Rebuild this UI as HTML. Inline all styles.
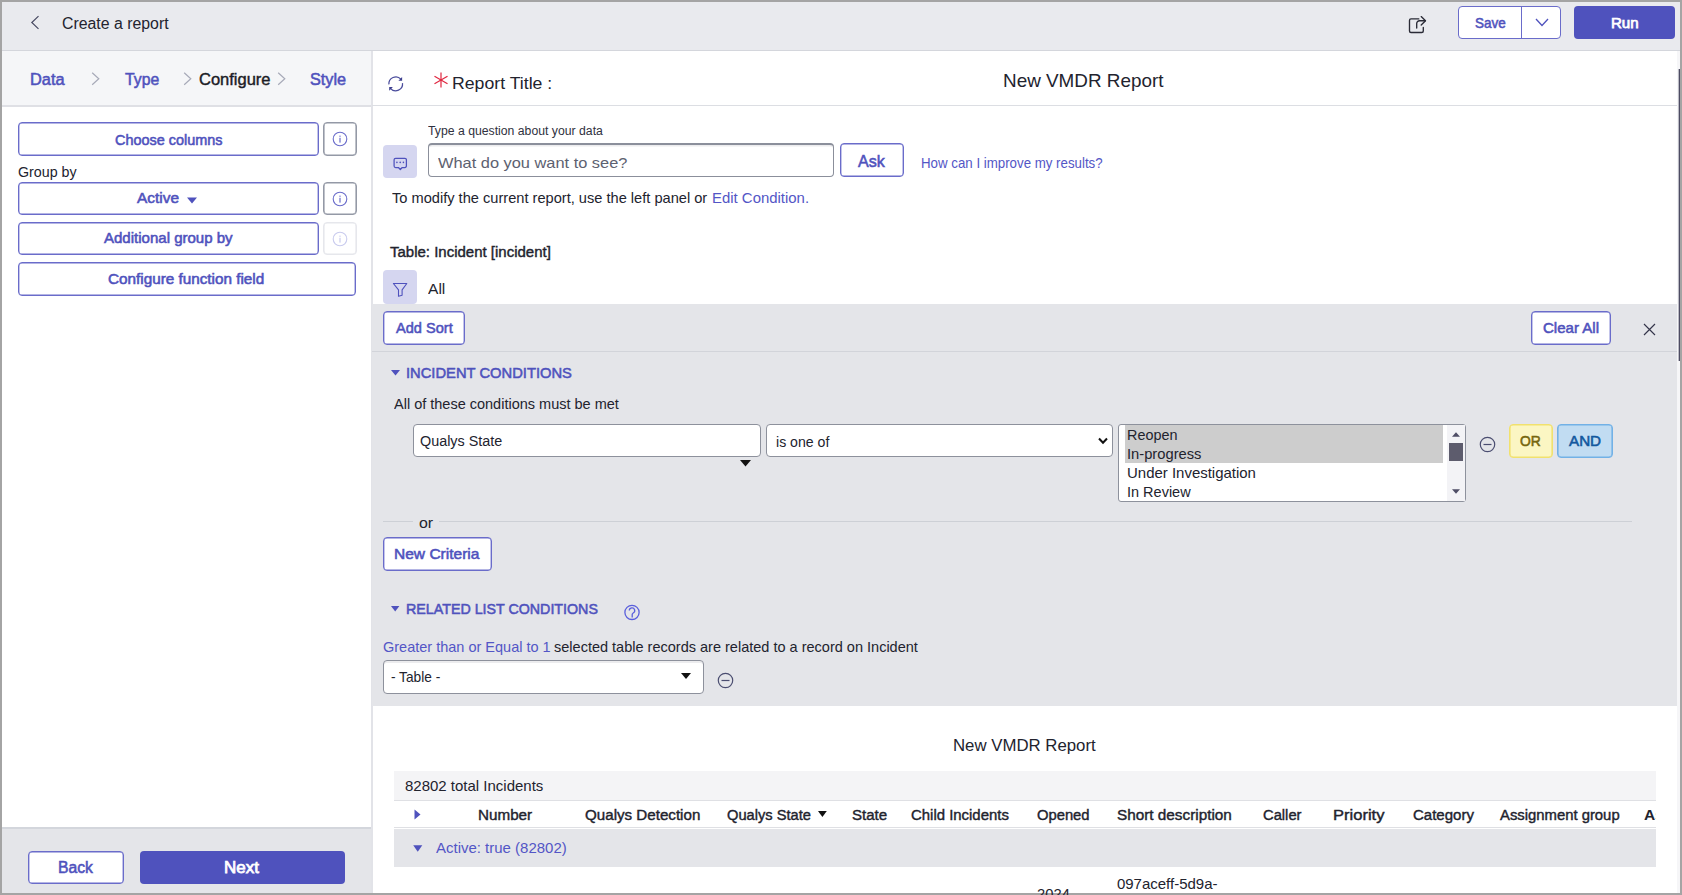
<!DOCTYPE html><html><head><meta charset="utf-8"><style>
html,body{margin:0;padding:0;width:1682px;height:895px;overflow:hidden;background:#fff}
.t{position:absolute;white-space:nowrap;font-family:"Liberation Sans",sans-serif;line-height:1;transform-origin:0 0}
</style></head><body>
<div style="position:absolute;left:0px;top:0px;width:1682px;height:895px;background:#a4a4a4"></div>
<div style="position:absolute;left:2px;top:2px;width:1678px;height:891px;background:#ffffff"></div>
<div style="position:absolute;left:2px;top:2px;width:1678px;height:48px;background:#e9eaee"></div>
<div style="position:absolute;left:2px;top:50px;width:1678px;height:1px;background:#d4d6dc"></div>
<div style="position:absolute;left:2px;top:51px;width:369px;height:54px;background:#f5f6f8"></div>
<div style="position:absolute;left:2px;top:105px;width:369px;height:2px;background:#dfe0e5"></div>
<div style="position:absolute;left:371px;top:51px;width:2px;height:842px;background:#e2e3e8"></div>
<div style="position:absolute;left:372px;top:105px;width:1305px;height:1px;background:#dcdee3"></div>
<div style="position:absolute;left:1677px;top:51px;width:3px;height:842px;background:#f6f6f8"></div>
<div style="position:absolute;left:1679px;top:69px;width:1px;height:292px;background:#4d4c63"></div>
<div style="position:absolute;left:1678px;top:69px;width:1px;height:292px;background:rgba(77,76,99,0.35)"></div>
<div style="position:absolute;left:2px;top:827px;width:369px;height:2px;background:#d3d6dc"></div>
<div style="position:absolute;left:2px;top:829px;width:369px;height:64px;background:#e4e5e9"></div>
<svg style="position:absolute;left:29px;top:15px" width="12" height="15" viewBox="0 0 12 15"><path d="M9.5 1.2 L2.8 7.5 L9.5 13.8" fill="none" stroke="#45475f" stroke-width="1.15"/></svg>
<svg style="position:absolute;left:1402px;top:10px" width="30" height="30" viewBox="0 0 30 30"><g fill="none" stroke="#2a2b36" stroke-width="1.35" stroke-linecap="round" stroke-linejoin="round"><path d="M16.8 8.9 H9 A1.5 1.5 0 0 0 7.5 10.4 V21 A1.5 1.5 0 0 0 9 22.5 H19.8 A1.5 1.5 0 0 0 21.3 21 V17.4"/><path d="M14.7 18.1 V13.6 A2.9 2.9 0 0 1 17.6 10.7 H23.3"/><path d="M19.2 6.6 L23.5 10.8 L19.2 15"/></g></svg>
<div style="position:absolute;left:1458px;top:6px;width:103px;height:33px;box-sizing:border-box;border:1px solid #6a6cca;border-radius:4px;background:#fff"></div>
<div style="position:absolute;left:1521px;top:6px;width:1px;height:33px;background:#6a6cca"></div>
<svg style="position:absolute;left:1535px;top:18px" width="14" height="9" viewBox="0 0 14 9"><path d="M1 1 L7 7.5 L13 1" fill="none" stroke="#4f52bd" stroke-width="1.3"/></svg>
<div style="position:absolute;left:1574px;top:6px;width:101px;height:33px;background:#4f52bd;border-radius:4px"></div>
<svg style="position:absolute;left:90.5px;top:72px" width="10" height="14" viewBox="0 0 10 14"><path d="M1.2 0.8 L7.8 6.8 L1.2 12.8" fill="none" stroke="#a7aab8" stroke-width="1.2"/></svg>
<svg style="position:absolute;left:183px;top:72px" width="10" height="14" viewBox="0 0 10 14"><path d="M1.2 0.8 L7.8 6.8 L1.2 12.8" fill="none" stroke="#a7aab8" stroke-width="1.2"/></svg>
<svg style="position:absolute;left:276.6px;top:72px" width="10" height="14" viewBox="0 0 10 14"><path d="M1.2 0.8 L7.8 6.8 L1.2 12.8" fill="none" stroke="#a7aab8" stroke-width="1.2"/></svg>
<div style="position:absolute;left:18px;top:122px;width:301px;height:34px;box-sizing:border-box;border:1px solid #6a6cca;box-shadow:inset 0 0 0 0.4px #6a6cca;border-radius:4px;background:#fff"></div>
<div style="position:absolute;left:323px;top:122px;width:34px;height:34px;box-sizing:border-box;border:1px solid #9499a6;box-shadow:inset 0 0 0 0.6px #9499a6;border-radius:4px;background:#fff"></div>
<svg style="position:absolute;left:332.0px;top:131.0px;opacity:1" width="16" height="16" viewBox="0 0 16 16"><circle cx="8" cy="8" r="6.8" fill="none" stroke="#6a6cca" stroke-width="1.1"/><rect x="7.4" y="4.6" width="1.2" height="1.2" fill="#6a6cca"/><rect x="7.4" y="6.8" width="1.2" height="4.8" fill="#6a6cca"/></svg>
<div style="position:absolute;left:18px;top:182px;width:301px;height:33px;box-sizing:border-box;border:1px solid #6a6cca;box-shadow:inset 0 0 0 0.4px #6a6cca;border-radius:4px;background:#fff"></div>
<div style="position:absolute;left:323px;top:182px;width:34px;height:33px;box-sizing:border-box;border:1px solid #9499a6;box-shadow:inset 0 0 0 0.6px #9499a6;border-radius:4px;background:#fff"></div>
<svg style="position:absolute;left:332.0px;top:190.5px;opacity:1" width="16" height="16" viewBox="0 0 16 16"><circle cx="8" cy="8" r="6.8" fill="none" stroke="#6a6cca" stroke-width="1.1"/><rect x="7.4" y="4.6" width="1.2" height="1.2" fill="#6a6cca"/><rect x="7.4" y="6.8" width="1.2" height="4.8" fill="#6a6cca"/></svg>
<svg style="position:absolute;left:187px;top:197px" width="10" height="7" viewBox="0 0 10 7"><path d="M0 0.5 H10 L5 6.5 Z" fill="#4f52bd"/></svg>
<div style="position:absolute;left:18px;top:222px;width:301px;height:33px;box-sizing:border-box;border:1px solid #6a6cca;box-shadow:inset 0 0 0 0.4px #6a6cca;border-radius:4px;background:#fff"></div>
<div style="position:absolute;left:323px;top:222px;width:34px;height:33px;box-sizing:border-box;border:1px solid #e6e7ec;box-shadow:inset 0 0 0 0.6px #e6e7ec;border-radius:4px;background:#fff"></div>
<svg style="position:absolute;left:332.0px;top:230.5px;opacity:1" width="16" height="16" viewBox="0 0 16 16"><circle cx="8" cy="8" r="6.8" fill="none" stroke="#c9cbee" stroke-width="1.1"/><rect x="7.4" y="4.6" width="1.2" height="1.2" fill="#c9cbee"/><rect x="7.4" y="6.8" width="1.2" height="4.8" fill="#c9cbee"/></svg>
<div style="position:absolute;left:18px;top:262px;width:338px;height:34px;box-sizing:border-box;border:1px solid #6a6cca;box-shadow:inset 0 0 0 0.4px #6a6cca;border-radius:4px;background:#fff"></div>
<div style="position:absolute;left:28px;top:851px;width:96px;height:33px;box-sizing:border-box;border:1px solid #6a6cca;box-shadow:inset 0 0 0 0.4px #6a6cca;border-radius:4px;background:#fff"></div>
<div style="position:absolute;left:140px;top:851px;width:205px;height:33px;background:#4f52bd;border-radius:4px"></div>
<svg style="position:absolute;left:382px;top:68px" width="28" height="28" viewBox="0 0 28 28"><g fill="none" stroke="#4a4c9c" stroke-width="1.25"><path d="M6.9 16.4 A6.9 6.9 0 0 1 18.9 11.2"/><path d="M20.5 15.1 A6.9 6.9 0 0 1 8.6 20.6"/></g><path d="M20.1 9.0 V12.7 H16.4 Z" fill="#3e408f"/><path d="M7.2 19.0 H10.9 L7.2 22.7 Z" fill="#3e408f"/></svg>
<svg style="position:absolute;left:433px;top:72px" width="16" height="16" viewBox="0 0 16 16"><g stroke="#e0263f" stroke-width="1.2"><path d="M8 0.5 V15.5"/><path d="M1.5 4.2 L14.5 11.8"/><path d="M1.5 11.8 L14.5 4.2"/></g></svg>
<div style="position:absolute;left:383px;top:145px;width:34px;height:33px;background:#d5d6f0;border-radius:4px"></div>
<svg style="position:absolute;left:392px;top:154px" width="16" height="17" viewBox="0 0 16 17"><path d="M3.6 4.3 H12.9 A1.5 1.5 0 0 1 14.4 5.8 V12 A1.5 1.5 0 0 1 12.9 13.5 H10.2 L8.3 15.5 L6.4 13.5 H3.6 A1.5 1.5 0 0 1 2.1 12 V5.8 A1.5 1.5 0 0 1 3.6 4.3 Z" fill="none" stroke="#4f52bd" stroke-width="1.25" stroke-linejoin="round"/><circle cx="4.9" cy="8.4" r="0.8" fill="#4f52bd"/><circle cx="8.2" cy="8.4" r="0.8" fill="#4f52bd"/><circle cx="11.4" cy="8.4" r="0.8" fill="#4f52bd"/></svg>
<div style="position:absolute;left:428px;top:143px;width:406px;height:34px;box-sizing:border-box;border:1px solid #8b8f9b;border-top:2px solid #8b8f9b;border-radius:4px;background:#fff;box-shadow:inset 0 1.5px 0 #ececee"></div>
<div style="position:absolute;left:840px;top:143px;width:64px;height:34px;box-sizing:border-box;border:1px solid #6a6cca;box-shadow:inset 0 0 0 0.4px #6a6cca;border-radius:4px;background:#fff"></div>
<div style="position:absolute;left:383px;top:270px;width:34px;height:34px;background:#d5d6f0;border-radius:4px"></div>
<svg style="position:absolute;left:380px;top:267px" width="40" height="40" viewBox="0 0 40 40"><path d="M13.4 16.5 H26.8 L22.1 22.8 V28.2 L18.5 29.3 V22.8 Z" fill="none" stroke="#4f52bd" stroke-width="1.1" stroke-linejoin="round"/></svg>
<div style="position:absolute;left:372px;top:304px;width:1305px;height:402px;background:#e4e5e9"></div>
<div style="position:absolute;left:372px;top:351px;width:1305px;height:1px;background:#d2d4da"></div>
<div style="position:absolute;left:383px;top:311px;width:82px;height:34px;box-sizing:border-box;border:1px solid #6a6cca;box-shadow:inset 0 0 0 0.4px #6a6cca;border-radius:4px;background:#fff"></div>
<div style="position:absolute;left:1531px;top:311px;width:80px;height:34px;box-sizing:border-box;border:1px solid #6a6cca;box-shadow:inset 0 0 0 0.4px #6a6cca;border-radius:4px;background:#fff"></div>
<svg style="position:absolute;left:1643px;top:323px" width="13" height="13" viewBox="0 0 13 13"><path d="M1 1 L12 12 M12 1 L1 12" stroke="#34354a" stroke-width="1.15"/></svg>
<svg style="position:absolute;left:391px;top:370px" width="9" height="6" viewBox="0 0 9 6"><path d="M0 0 H9 L4.5 5.5 Z" fill="#4f52bd"/></svg>
<div style="position:absolute;left:413px;top:424px;width:348px;height:33px;box-sizing:border-box;border:1px solid #8d919c;border-radius:4px;background:#fff"></div>
<svg style="position:absolute;left:740px;top:460px" width="11" height="7" viewBox="0 0 11 7"><path d="M0 0 H11 L5.5 6.5 Z" fill="#111"/></svg>
<div style="position:absolute;left:766px;top:424px;width:347px;height:33px;box-sizing:border-box;border:1px solid #8d919c;border-radius:4px;background:#fff"></div>
<svg style="position:absolute;left:1098px;top:437px" width="10" height="8" viewBox="0 0 10 8"><path d="M1 1.5 L5 5.8 L9 1.5" fill="none" stroke="#111" stroke-width="2"/></svg>
<div style="position:absolute;left:1118px;top:424px;width:348px;height:78px;box-sizing:border-box;border:1px solid #8d919c;border-radius:3px;background:#fff"></div>
<div style="position:absolute;left:1125px;top:425px;width:318px;height:38px;background:#cdcdcd"></div>
<div style="position:absolute;left:1447px;top:425px;width:18px;height:76px;background:#f3f3f6"></div>
<svg style="position:absolute;left:1452px;top:432px" width="8" height="5" viewBox="0 0 8 5"><path d="M0 4.8 H8 L4 0.3 Z" fill="#4f4e66"/></svg>
<div style="position:absolute;left:1449px;top:443px;width:14px;height:18px;background:#5d5c6d"></div>
<svg style="position:absolute;left:1452px;top:489px" width="8" height="5" viewBox="0 0 8 5"><path d="M0 0.2 H8 L4 4.7 Z" fill="#4f4e66"/></svg>
<svg style="position:absolute;left:1478.5px;top:435.5px" width="17" height="17" viewBox="0 0 17 17"><circle cx="8.5" cy="8.5" r="7.2" fill="none" stroke="#4a4d70" stroke-width="1.2"/><path d="M4.5 8.5 H12.5" stroke="#4a4d70" stroke-width="1.2"/></svg>
<div style="position:absolute;left:1508.5px;top:424px;width:44.5px;height:34px;box-sizing:border-box;border:1px solid #f1e16e;box-shadow:inset 0 0 0 0.6px #f1e16e;border-radius:4px;background:#fbf6c3"></div>
<div style="position:absolute;left:1557px;top:424px;width:56px;height:34px;box-sizing:border-box;border:1px solid #72b1e6;box-shadow:inset 0 0 0 0.6px #72b1e6;border-radius:4px;background:#c1dcf2"></div>
<div style="position:absolute;left:383px;top:521px;width:30px;height:1px;background:#cdd0d6"></div>
<div style="position:absolute;left:439px;top:521px;width:1193px;height:1px;background:#cdd0d6"></div>
<div style="position:absolute;left:383px;top:537px;width:109px;height:34px;box-sizing:border-box;border:1px solid #6a6cca;box-shadow:inset 0 0 0 0.4px #6a6cca;border-radius:4px;background:#fff"></div>
<svg style="position:absolute;left:390.8px;top:606.3px" width="9" height="6" viewBox="0 0 9 6"><path d="M0 0 H8.4 L4.2 5.6 Z" fill="#4f52bd"/></svg>
<svg style="position:absolute;left:622px;top:602px" width="20" height="20" viewBox="0 0 20 20"><circle cx="10" cy="10.4" r="7.1" fill="none" stroke="#5a5fdc" stroke-width="1.3"/><path d="M7.3 8.6 A2.7 2.7 0 1 1 11.2 11 Q10.2 11.6 10.2 12.6 V15.6" fill="none" stroke="#5a5fdc" stroke-width="1.3"/></svg>
<div style="position:absolute;left:383px;top:660px;width:321px;height:34px;box-sizing:border-box;border:1px solid #8d919c;border-radius:4px;background:#fff;box-shadow:inset 0 2px 0 #ececee"></div>
<svg style="position:absolute;left:681px;top:673px" width="10" height="7" viewBox="0 0 10 7"><path d="M0 0 H10 L5 6 Z" fill="#111"/></svg>
<svg style="position:absolute;left:716.5px;top:672.0px" width="17" height="17" viewBox="0 0 17 17"><circle cx="8.5" cy="8.5" r="7.2" fill="none" stroke="#4a4d70" stroke-width="1.2"/><path d="M4.5 8.5 H12.5" stroke="#4a4d70" stroke-width="1.2"/></svg>
<div style="position:absolute;left:393.5px;top:770.5px;width:1262.0px;height:29.5px;background:#f4f4f6"></div>
<div style="position:absolute;left:393.5px;top:800px;width:1262.0px;height:1px;background:#dfe0e4"></div>
<div style="position:absolute;left:393.5px;top:827px;width:1262.0px;height:1px;background:#dfe0e4"></div>
<div style="position:absolute;left:393.5px;top:829px;width:1262.0px;height:38px;background:#e4e5e9"></div>
<svg style="position:absolute;left:414px;top:809px" width="7" height="11" viewBox="0 0 7 11"><path d="M0.5 0.5 V10.5 L6.5 5.5 Z" fill="#4f52bd"/></svg>
<div style="position:absolute;left:1644px;top:800px;width:11.5px;height:27px;overflow:hidden"><span style="position:absolute;left:0;top:6.5px;font:700 15.5px/1 'Liberation Sans',sans-serif;color:#22232e">As</span></div>
<svg style="position:absolute;left:818.3px;top:811px" width="9" height="6" viewBox="0 0 9 6"><path d="M0 0 H8.8 L4.4 5.9 Z" fill="#111"/></svg>
<svg style="position:absolute;left:412.5px;top:845px" width="10" height="7" viewBox="0 0 10 7"><path d="M0.2 0.2 H9.3 L4.75 6.8 Z" fill="#4f52bd"/></svg>
<span class="t" style="left:61.81px;top:15.96px;font-size:16px;font-weight:400;color:#22232e;transform:scaleX(0.9907);">Create a report</span>
<span class="t" style="left:1475.00px;top:15.40px;font-size:15px;font-weight:400;-webkit-text-stroke:0.55px #4f52bd;color:#4f52bd;transform:scaleX(0.9000);">Save</span>
<span class="t" style="left:1610.60px;top:15.40px;font-size:15px;font-weight:400;-webkit-text-stroke:0.75px #ffffff;color:#ffffff;transform:scaleX(1.0038);">Run</span>
<span class="t" style="left:30.24px;top:70.61px;font-size:17px;font-weight:400;-webkit-text-stroke:0.55px #4f52bd;color:#4f52bd;transform:scaleX(0.9639);">Data</span>
<span class="t" style="left:124.80px;top:70.61px;font-size:17px;font-weight:400;-webkit-text-stroke:0.55px #4f52bd;color:#4f52bd;transform:scaleX(0.9270);">Type</span>
<span class="t" style="left:198.60px;top:70.61px;font-size:17px;font-weight:400;-webkit-text-stroke:0.42px #1b1c26;color:#1b1c26;transform:scaleX(0.9703);">Configure</span>
<span class="t" style="left:309.70px;top:70.61px;font-size:17px;font-weight:400;-webkit-text-stroke:0.55px #4f52bd;color:#4f52bd;transform:scaleX(0.9553);">Style</span>
<span class="t" style="left:114.50px;top:132.73px;font-size:14.5px;font-weight:400;-webkit-text-stroke:0.55px #4f52bd;color:#4f52bd;transform:scaleX(0.9954);">Choose columns</span>
<span class="t" style="left:18.30px;top:165.25px;font-size:14px;font-weight:400;color:#22232e;transform:scaleX(1.0190);">Group by</span>
<span class="t" style="left:136.50px;top:191.33px;font-size:14.5px;font-weight:400;-webkit-text-stroke:0.55px #4f52bd;color:#4f52bd;transform:scaleX(1.0625);">Active</span>
<span class="t" style="left:103.60px;top:230.93px;font-size:14.5px;font-weight:400;-webkit-text-stroke:0.55px #4f52bd;color:#4f52bd;transform:scaleX(1.0360);">Additional group by</span>
<span class="t" style="left:108.40px;top:271.73px;font-size:14.5px;font-weight:400;-webkit-text-stroke:0.55px #4f52bd;color:#4f52bd;transform:scaleX(1.0534);">Configure function field</span>
<span class="t" style="left:57.72px;top:859.76px;font-size:16px;font-weight:400;-webkit-text-stroke:0.55px #4f52bd;color:#4f52bd;transform:scaleX(0.9829);">Back</span>
<span class="t" style="left:223.64px;top:859.76px;font-size:16px;font-weight:400;-webkit-text-stroke:0.75px #ffffff;color:#ffffff;transform:scaleX(1.0606);">Next</span>
<span class="t" style="left:451.63px;top:74.53px;font-size:16.5px;font-weight:400;color:#22232e;transform:scaleX(1.0714);">Report Title :</span>
<span class="t" style="left:1003.18px;top:72.24px;font-size:18.5px;font-weight:400;color:#22232e;transform:scaleX(1.0204);">New VMDR Report</span>
<span class="t" style="left:428.30px;top:125.24px;font-size:12px;font-weight:400;color:#2f3140;transform:scaleX(1.0198);">Type a question about your data</span>
<span class="t" style="left:437.50px;top:154.50px;font-size:15px;font-weight:400;color:#5d6170;transform:scaleX(1.0919);">What do you want to see?</span>
<span class="t" style="left:858.00px;top:153.13px;font-size:16.5px;font-weight:400;-webkit-text-stroke:0.55px #4f52bd;color:#4f52bd;transform:scaleX(0.9750);">Ask</span>
<span class="t" style="left:920.61px;top:155.10px;font-size:15px;font-weight:400;color:#5356c6;transform:scaleX(0.8858);">How can I improve my results?</span>
<span class="t" style="left:392.00px;top:189.80px;font-size:15px;font-weight:400;color:#22232e;transform:scaleX(0.9744);">To modify the current report, use the left panel or</span>
<span class="t" style="left:711.51px;top:189.80px;font-size:15px;font-weight:400;color:#5356c6;transform:scaleX(0.9948);">Edit Condition.</span>
<span class="t" style="left:389.90px;top:244.48px;font-size:15.5px;font-weight:400;-webkit-text-stroke:0.42px #22232e;color:#22232e;transform:scaleX(0.9669);">Table: Incident [incident]</span>
<span class="t" style="left:427.60px;top:281.00px;font-size:15px;font-weight:400;color:#22232e;transform:scaleX(1.0375);">All</span>
<span class="t" style="left:395.50px;top:320.30px;font-size:15px;font-weight:400;-webkit-text-stroke:0.55px #4f52bd;color:#4f52bd;transform:scaleX(0.9712);">Add Sort</span>
<span class="t" style="left:1543.00px;top:319.90px;font-size:15px;font-weight:400;-webkit-text-stroke:0.55px #4f52bd;color:#4f52bd;transform:scaleX(1.0036);">Clear All</span>
<span class="t" style="left:406.15px;top:365.38px;font-size:15.5px;font-weight:400;-webkit-text-stroke:0.55px #4f52bd;color:#4f52bd;transform:scaleX(0.9506);">INCIDENT CONDITIONS</span>
<span class="t" style="left:393.70px;top:396.28px;font-size:15.5px;font-weight:400;color:#22232e;transform:scaleX(0.9353);">All of these conditions must be met</span>
<span class="t" style="left:420.40px;top:433.08px;font-size:15.5px;font-weight:400;color:#22232e;transform:scaleX(0.9273);">Qualys State</span>
<span class="t" style="left:776.29px;top:433.78px;font-size:15.5px;font-weight:400;color:#22232e;transform:scaleX(0.9103);">is one of</span>
<span class="t" style="left:1126.64px;top:427.00px;font-size:15px;font-weight:400;color:#22232e;transform:scaleX(0.9588);">Reopen</span>
<span class="t" style="left:1126.62px;top:445.60px;font-size:15px;font-weight:400;color:#22232e;transform:scaleX(0.9813);">In-progress</span>
<span class="t" style="left:1126.60px;top:464.70px;font-size:15px;font-weight:400;color:#22232e;transform:scaleX(0.9977);">Under Investigation</span>
<span class="t" style="left:1126.63px;top:484.20px;font-size:15px;font-weight:400;color:#22232e;transform:scaleX(0.9662);">In Review</span>
<span class="t" style="left:1519.60px;top:433.63px;font-size:14.5px;font-weight:400;-webkit-text-stroke:0.55px #76660f;color:#76660f;transform:scaleX(0.9545);">OR</span>
<span class="t" style="left:1569.00px;top:433.63px;font-size:14.5px;font-weight:400;-webkit-text-stroke:0.55px #12589e;color:#12589e;transform:scaleX(1.0484);">AND</span>
<span class="t" style="left:419.30px;top:514.90px;font-size:15px;font-weight:400;color:#22232e;transform:scaleX(1.0615);">or</span>
<span class="t" style="left:393.76px;top:546.00px;font-size:15px;font-weight:400;-webkit-text-stroke:0.55px #4f52bd;color:#4f52bd;transform:scaleX(1.0354);">New Criteria</span>
<span class="t" style="left:405.65px;top:601.10px;font-size:15px;font-weight:400;-webkit-text-stroke:0.55px #4f52bd;color:#4f52bd;transform:scaleX(0.9502);">RELATED LIST CONDITIONS</span>
<span class="t" style="left:383.10px;top:638.50px;font-size:15px;font-weight:400;color:#5356c6;transform:scaleX(0.9665);">Greater than or Equal to 1</span>
<span class="t" style="left:553.80px;top:638.50px;font-size:15px;font-weight:400;color:#22232e;transform:scaleX(0.9676);">selected table records are related to a record on Incident</span>
<span class="t" style="left:390.70px;top:669.20px;font-size:15px;font-weight:400;color:#22232e;transform:scaleX(0.9130);">- Table -</span>
<span class="t" style="left:952.58px;top:736.83px;font-size:16.5px;font-weight:400;color:#22232e;transform:scaleX(1.0171);">New VMDR Report</span>
<span class="t" style="left:404.50px;top:778.73px;font-size:14.5px;font-weight:400;color:#22232e;transform:scaleX(1.0336);">82802 total Incidents</span>
<span class="t" style="left:477.72px;top:807.08px;font-size:15.5px;font-weight:400;-webkit-text-stroke:0.42px #22232e;color:#22232e;transform:scaleX(0.9818);">Number</span>
<span class="t" style="left:584.80px;top:807.08px;font-size:15.5px;font-weight:400;-webkit-text-stroke:0.42px #22232e;color:#22232e;transform:scaleX(0.9771);">Qualys Detection</span>
<span class="t" style="left:727.10px;top:807.08px;font-size:15.5px;font-weight:400;-webkit-text-stroke:0.42px #22232e;color:#22232e;transform:scaleX(0.9449);">Qualys State</span>
<span class="t" style="left:851.60px;top:807.08px;font-size:15.5px;font-weight:400;-webkit-text-stroke:0.42px #22232e;color:#22232e;transform:scaleX(0.9722);">State</span>
<span class="t" style="left:911.30px;top:807.08px;font-size:15.5px;font-weight:400;-webkit-text-stroke:0.42px #22232e;color:#22232e;transform:scaleX(0.9627);">Child Incidents</span>
<span class="t" style="left:1036.50px;top:807.08px;font-size:15.5px;font-weight:400;-webkit-text-stroke:0.42px #22232e;color:#22232e;transform:scaleX(0.9527);">Opened</span>
<span class="t" style="left:1116.90px;top:807.08px;font-size:15.5px;font-weight:400;-webkit-text-stroke:0.42px #22232e;color:#22232e;transform:scaleX(0.9871);">Short description</span>
<span class="t" style="left:1263.30px;top:807.08px;font-size:15.5px;font-weight:400;-webkit-text-stroke:0.42px #22232e;color:#22232e;transform:scaleX(0.9512);">Caller</span>
<span class="t" style="left:1332.73px;top:807.08px;font-size:15.5px;font-weight:400;-webkit-text-stroke:0.42px #22232e;color:#22232e;transform:scaleX(1.0667);">Priority</span>
<span class="t" style="left:1412.50px;top:807.08px;font-size:15.5px;font-weight:400;-webkit-text-stroke:0.42px #22232e;color:#22232e;transform:scaleX(0.9683);">Category</span>
<span class="t" style="left:1499.50px;top:807.08px;font-size:15.5px;font-weight:400;-webkit-text-stroke:0.42px #22232e;color:#22232e;transform:scaleX(0.9576);">Assignment group</span>
<span class="t" style="left:436.40px;top:840.30px;font-size:15px;font-weight:400;color:#5356c6;transform:scaleX(0.9985);">Active: true (82802)</span>
<span class="t" style="left:1116.90px;top:875.80px;font-size:15px;font-weight:400;color:#22232e;transform:scaleX(1.0000);">097aceff-5d9a-</span>
<span class="t" style="left:1036.50px;top:886.30px;font-size:15px;font-weight:400;color:#22232e;transform:scaleX(0.9848);">2024</span>
</body></html>
